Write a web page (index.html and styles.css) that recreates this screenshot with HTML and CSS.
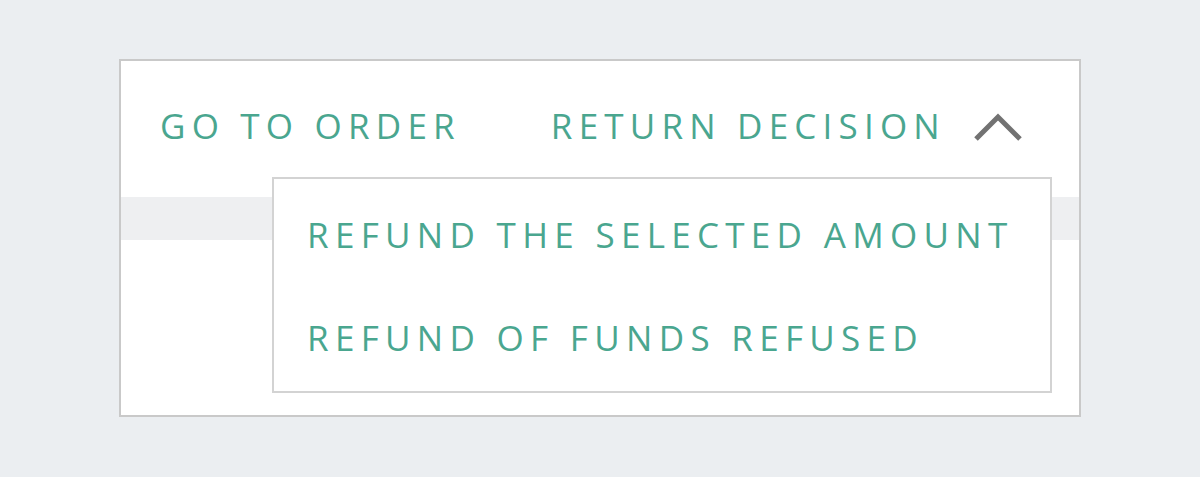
FILE: index.html
```html
<!DOCTYPE html>
<html lang="en">
<head>
<meta charset="utf-8">
<title>Return decision</title>
<link rel="stylesheet" href="styles.css">
</head>
<body>
<div class="panel">
  <nav class="nav">
    <a class="nav-link" href="#">GO TO ORDER</a>
    <button class="nav-toggle" type="button">
      <span class="nav-link">RETURN DECISION</span>
      <svg class="chevron" width="48" height="30" viewBox="0 0 48 30" aria-hidden="true">
        <polyline points="2,27 24,5 46,27" fill="none" stroke="#727272" stroke-width="5"/>
      </svg>
    </button>
  </nav>
  <div class="band"></div>
  <div class="menu">
    <a class="menu-item" href="#">REFUND THE SELECTED AMOUNT</a>
    <a class="menu-item" href="#">REFUND OF FUNDS REFUSED</a>
  </div>
</div>
</body>
</html>
```
FILE: styles.css
```css
html, body {
  margin: 0;
  padding: 0;
}
body {
  background: #ebeef1;
  font-family: "Open Sans", "Liberation Sans", sans-serif;
  padding: 59px 0 0 119px;
  height: 477px;
  box-sizing: border-box;
}
.panel {
  position: relative;
  width: 958px;
  height: 354px;
  background: #ffffff;
  border: 2px solid #c9c9c9;
  display: flex;
  flex-direction: column;
}
.nav {
  height: 136px;
  box-sizing: border-box;
  padding: 42px 0 0 39px;
  display: flex;
  align-items: flex-start;
  gap: 90px;
}
.nav-link {
  font-size: 35px;
  line-height: 46px;
  letter-spacing: 6.2px;
  color: #4aa68f;
  text-decoration: none;
  white-space: nowrap;
}
.nav-toggle {
  display: flex;
  align-items: flex-start;
  gap: 28px;
  padding: 0;
  border: 0;
  background: none;
  font: inherit;
  cursor: pointer;
}
.chevron {
  display: block;
  margin-top: 9px;
}
.band {
  height: 43px;
  background: #eeeff1;
}
.menu {
  position: absolute;
  left: 151px;
  top: 116px;
  box-sizing: border-box;
  width: 780px;
  height: 216px;
  padding: 33px 0 0 33px;
  background: #ffffff;
  border: 2px solid #d3d3d3;
  display: flex;
  flex-direction: column;
  gap: 57px;
}
.menu-item {
  font-size: 35px;
  line-height: 46px;
  letter-spacing: 6.3px;
  color: #4aa68f;
  text-decoration: none;
  white-space: nowrap;
}
```
